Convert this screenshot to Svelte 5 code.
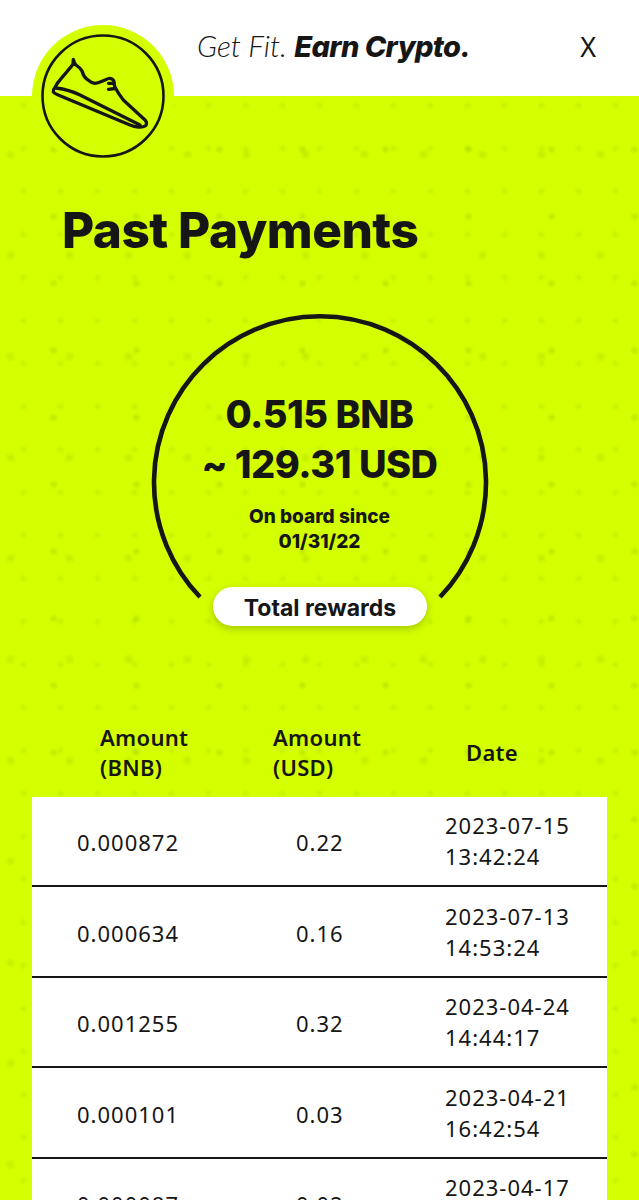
<script lang="ts">
	interface Payment {
		bnb: string
		usd: string
		date: string
		time: string
	}

	const payments: Array<Payment> = [
		{ bnb: '0.000872', usd: '0.22', date: '2023-07-15', time: '13:42:24' },
		{ bnb: '0.000634', usd: '0.16', date: '2023-07-13', time: '14:53:24' },
		{ bnb: '0.001255', usd: '0.32', date: '2023-04-24', time: '14:44:17' },
		{ bnb: '0.000101', usd: '0.03', date: '2023-04-21', time: '16:42:54' },
		{ bnb: '0.000087', usd: '0.02', date: '2023-04-17', time: '11:20:36' }
	]
</script>

<div class="page">
	<header class="top">
		<p class="slogan">Get Fit. <b>Earn Crypto.</b></p>
		<span class="close">X</span>
	</header>

	<div class="badge">
		<svg viewBox="0 0 142 142" width="142" height="142" aria-hidden="true">
			<circle cx="71" cy="71" r="60.5" fill="none" stroke="#161616" stroke-width="2.6" />
			<g fill="none" stroke="#161616" stroke-width="3.3" stroke-linejoin="round" stroke-linecap="round">
				<path d="M41.3 34.3 C42 37 43 39 44 40 C47 42 49 44 50 46 C51 50 52 52 55 54.3 C58 57 60 58 63 58.3 C67 58 70 56 73 55 C75 54 77 53 78 53.3 C81 54 82 55 82 57 C82 59 82 60 83 62.3 C85 66 88 71 91.3 75 L113 95 C115 97 115 100 113 101 C110 103 103 102 98 100 L28 70.7 C25 69.5 22 68 21.3 66.7 C21 65 22 63.5 23 62.3 C24 60 26 57 28 55 C31 51 34 48 36.3 45 C38 43 40 41 41 39 Z" />
				<path d="M24 63 C32 64 40 66 48 70 L108 100" />
				<path d="M76.5 58.3 L82 58.3 M76.5 64.3 L83 63.5" />
			</g>
		</svg>
	</div>

	<main class="panel">
		<h1>Past Payments</h1>

		<section class="total">
			<svg class="arc" viewBox="0 0 340 290" width="340" height="290" aria-hidden="true">
				<path d="M50 284 A166 166 0 1 1 290 284" fill="none" stroke="#161616" stroke-width="4.6" />
			</svg>
			<div class="amount">0.515 BNB</div>
			<div class="amount">~ 129.31 USD</div>
			<div class="since">On board since<br />01/31/22</div>
			<div class="pill">Total rewards</div>
		</section>

		<div class="table-head">
			<span>Amount<br />(BNB)</span>
			<span>Amount<br />(USD)</span>
			<span>Date</span>
		</div>

		<div class="table">
			{#each payments as p}
				<div class="row">
					<span class="single">{p.bnb}</span>
					<span class="single">{p.usd}</span>
					<span>{p.date}<br />{p.time}</span>
				</div>
			{/each}
		</div>
	</main>
</div>

<style>
	:global(body) {
		background: #fff;
	}

	.page {
		position: relative;
		height: 1200px;
		overflow: hidden;
		font-family: Inter, 'Noto Sans', sans-serif;
		color: #161616;
	}

	.top {
		height: 96px;
		display: flex;
		align-items: flex-start;
		background: #fff;
	}

	.slogan {
		margin: 28px 0 0 197px;
		font-family: Lato, sans-serif;
		font-size: 29.5px;
		line-height: 36px;
		font-weight: 300;
		font-style: italic;
	}

	.slogan b {
		font-family: Inter, sans-serif;
		font-size: 29px;
		font-weight: 800;
		letter-spacing: -0.6px;
	}

	.close {
		margin: 29px 0 0 auto;
		padding-right: 43px;
		font-family: 'Noto Sans', sans-serif;
		font-size: 27px;
		line-height: 36px;
		font-weight: 400;
	}

	.badge {
		position: absolute;
		left: 32px;
		top: 25px;
		width: 142px;
		height: 142px;
		border-radius: 50%;
		background: #d4ff00;
	}

	.panel {
		background-color: #d4ff00;
		background-image:
			radial-gradient(circle, rgba(165, 210, 0, 0.5) 0, transparent 5px),
			radial-gradient(circle, rgba(165, 210, 0, 0.4) 0, transparent 6px),
			radial-gradient(circle, rgba(165, 210, 0, 0.3) 0, transparent 5px);
		background-size: 83px 67px, 59px 101px, 37px 43px;
		background-position: 12px 20px, 40px 8px, 5px 31px;
		padding-top: 104px;
	}

	h1 {
		margin: 0 0 0 62px;
		font-size: 49.5px;
		line-height: 60px;
		font-weight: 800;
		letter-spacing: -0.5px;
	}

	.total {
		position: relative;
		margin-top: 53px;
		height: 313px;
		display: flex;
		flex-direction: column;
		align-items: center;
		padding-top: 76px;
		box-sizing: border-box;
	}

	.arc {
		position: absolute;
		left: 150px;
		top: 0;
	}

	.amount {
		font-size: 38px;
		line-height: 50px;
		font-weight: 800;
		letter-spacing: -0.5px;
	}

	.since {
		margin-top: 15px;
		font-size: 19px;
		line-height: 25px;
		font-weight: 800;
		text-align: center;
	}

	.pill {
		position: absolute;
		left: 213px;
		top: 274px;
		width: 214px;
		height: 39px;
		border-radius: 20px;
		background: #fff;
		box-shadow: 0 3px 8px rgba(0, 0, 0, 0.22);
		font-size: 23px;
		line-height: 42px;
		font-weight: 700;
		text-align: center;
	}

	.table-head {
		margin-top: 86px;
		margin-bottom: 4.7px;
		height: 80px;
		display: grid;
		grid-template-columns: 173px 193px 1fr;
		padding-left: 100px;
		align-items: center;
		font-family: 'Noto Sans', sans-serif;
		font-size: 22px;
		line-height: 30px;
		font-weight: 600;
		letter-spacing: 0.3px;
	}

	.table {
		margin: 0 32px;
		background: #fff;
		font-family: 'Noto Sans', sans-serif;
		font-size: 22px;
		line-height: 31px;
		font-weight: 400;
		letter-spacing: 1px;
	}

	.row {
		height: 90.6px;
		box-sizing: border-box;
		border-bottom: 2px solid #161616;
		display: grid;
		grid-template-columns: 219px 149px 1fr;
		padding-left: 45px;
		align-items: center;
	}

	.single {
		padding-top: 3px;
	}
</style>
